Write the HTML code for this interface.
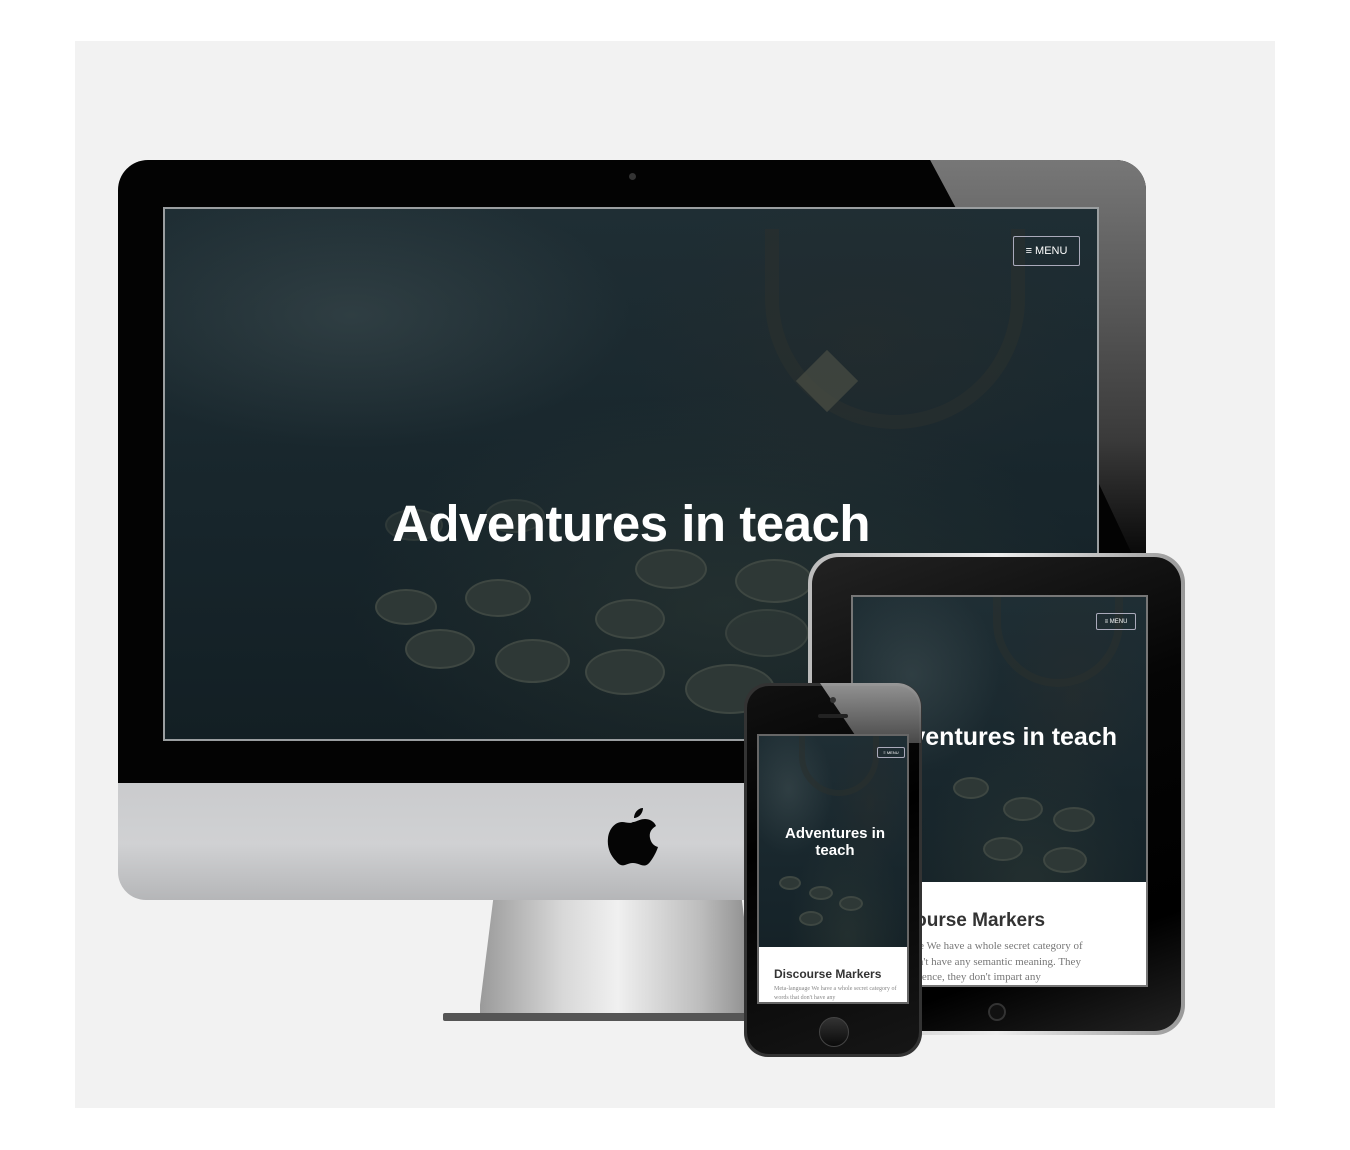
<!DOCTYPE html>
<html><head><meta charset="utf-8"><style>
*{margin:0;padding:0;box-sizing:border-box}
body{width:1350px;height:1150px;background:#fff;position:relative;overflow:hidden;font-family:"Liberation Sans",sans-serif}
.a{position:absolute}
.scr{background:
radial-gradient(ellipse 30% 25% at 20% 20%,rgba(70,85,88,.45),transparent),
radial-gradient(ellipse 40% 40% at 60% 75%,rgba(60,70,60,.35),transparent),
radial-gradient(ellipse 25% 30% at 75% 25%,rgba(40,45,45,.5),transparent),
linear-gradient(180deg,#1f2e34,#17252b 60%,#131f24);overflow:hidden}
.key{position:absolute;border-radius:50%;background:#2e3836;border:2px solid #3e4742}
.menu{position:absolute;border:1px solid #aab;border-radius:2px;color:#fff;font-size:11px;display:flex;align-items:center;justify-content:center}
</style></head><body>
<div class="a" style="left:75px;top:41px;width:1200px;height:1067px;background:#f2f2f2"></div>

<!-- iMac stand -->
<div class="a" style="left:480px;top:895px;width:275px;height:122px;background:linear-gradient(90deg,#9a9a9a,#d8d8d8 30%,#f0f0f0 50%,#bdbdbd 80%,#8a8a8a);clip-path:polygon(5% 0,95% 0,100% 90%,100% 100%,0 100%,0 90%)"></div>
<div class="a" style="left:443px;top:1013px;width:310px;height:8px;background:#555;border-radius:2px"></div>
<!-- iMac chin -->
<div class="a" style="left:118px;top:760px;width:1028px;height:140px;border-radius:0 0 28px 28px;background:linear-gradient(180deg,#c8c9cb,#d0d1d3 60%,#b5b6b8)"></div>
<!-- iMac bezel -->
<div class="a" style="left:118px;top:160px;width:1028px;height:623px;border-radius:30px 30px 0 0;background:#030303"></div>
<div class="a" style="left:118px;top:160px;width:1028px;height:623px;border-radius:30px 30px 0 0;background:linear-gradient(180deg,#777,#3a3a3a 45%,#050505 65%);clip-path:polygon(79% 0,100% 0,100% 68%,92% 40%)"></div>
<div class="a" style="left:629px;top:173px;width:7px;height:7px;border-radius:50%;background:#333"></div>
<!-- apple logo -->
<svg class="a" style="left:607px;top:806px" width="52" height="62" viewBox="0 0 52 62"><path d="M36 2c0 5-4 10-9 10 0-5 4-10 9-10zM26 16c3 0 7-3 12-3 4 0 9 2 11 7-5 3-7 7-6 12 1 5 4 8 8 9-2 6-5 11-8 15-3 4-6 4-9 3-3-1-5-2-8-2s-5 1-8 2c-3 1-6 0-9-4C3 49 0 41 1 32c1-9 7-16 14-16 4 0 8 2 11 0z" fill="#050505"/></svg>
<!-- iMac screen -->
<div class="a scr" style="left:163px;top:207px;width:936px;height:534px;border:2px solid #9a9ea0">
 <div class="key" style="left:240px;top:420px;width:70px;height:40px"></div>
 <div class="key" style="left:330px;top:430px;width:75px;height:44px"></div>
 <div class="key" style="left:420px;top:440px;width:80px;height:46px"></div>
 <div class="key" style="left:210px;top:380px;width:62px;height:36px"></div>
 <div class="key" style="left:300px;top:370px;width:66px;height:38px"></div>
 <div class="key" style="left:430px;top:390px;width:70px;height:40px"></div>
 <div class="key" style="left:520px;top:455px;width:90px;height:50px"></div>
 <div class="key" style="left:470px;top:340px;width:72px;height:40px"></div>
 <div class="key" style="left:570px;top:350px;width:78px;height:44px"></div>
 <div class="key" style="left:220px;top:300px;width:58px;height:32px;opacity:.6"></div>
 <div class="key" style="left:320px;top:290px;width:60px;height:34px;opacity:.6"></div>
 <div class="key" style="left:560px;top:400px;width:84px;height:48px;opacity:.8"></div>
 <div class="a" style="left:600px;top:20px;width:260px;height:200px;border:14px solid #2a302e;border-top:none;border-radius:0 0 130px 130px;opacity:.6"></div>
 <div class="a" style="left:640px;top:150px;width:44px;height:44px;background:#4a4f44;transform:rotate(45deg);opacity:.7"></div>
 <div class="a" style="left:0;top:285px;width:932px;text-align:center;color:#fff;font-weight:bold;font-size:51px;letter-spacing:-0.5px">Adventures in teach</div>
 <div class="menu" style="left:848px;top:27px;width:67px;height:30px">≡&nbsp;MENU</div>
</div>

<!-- iPad -->
<div class="a" style="left:808px;top:553px;width:377px;height:482px;border-radius:30px;background:linear-gradient(90deg,#bbb,#eee 50%,#999);"></div>
<div class="a" style="left:812px;top:557px;width:369px;height:474px;border-radius:27px;background:linear-gradient(160deg,#222,#050505 40%,#000 80%,#222)"></div>
<div class="a" style="left:988px;top:1003px;width:18px;height:18px;border-radius:50%;border:2px solid #333;background:#111"></div>
<div class="a scr" style="left:851px;top:595px;width:297px;height:392px;border:2px solid #777">
 <div class="key" style="left:100px;top:180px;width:36px;height:22px"></div>
 <div class="key" style="left:150px;top:200px;width:40px;height:24px"></div>
 <div class="key" style="left:200px;top:210px;width:42px;height:25px"></div>
 <div class="key" style="left:130px;top:240px;width:40px;height:24px"></div>
 <div class="key" style="left:190px;top:250px;width:44px;height:26px"></div>
 <div class="a" style="left:140px;top:0;width:130px;height:90px;border:8px solid #2a302e;border-top:none;border-radius:0 0 65px 65px;opacity:.6"></div>
 <div class="a" style="left:-270px;top:126px;width:534px;text-align:right;color:#fff;font-weight:bold;font-size:25px;white-space:nowrap">Adventures in teach</div>
 <div class="menu" style="left:243px;top:16px;width:40px;height:17px;font-size:6px">≡&nbsp;MENU</div>
 <div class="a" style="left:0;top:285px;width:297px;height:110px;background:#fff">
  <div class="a" style="left:22px;top:28px;color:#333;font-size:19px;font-weight:bold;white-space:nowrap">Discourse Markers</div>
  <div class="a" style="left:5px;top:57px;color:#777;font-family:'Liberation Serif',serif;font-size:11px;line-height:15.5px;width:330px;white-space:nowrap">Meta-language We have a whole secret category of<br>words that don't have any semantic meaning. They<br>add to the sentence, they don't impart any</div>
 </div>
</div>

<!-- iPhone -->
<div class="a" style="left:744px;top:683px;width:178px;height:374px;border-radius:24px;background:#333"></div>
<div class="a" style="left:747px;top:686px;width:172px;height:368px;border-radius:22px;background:linear-gradient(160deg,#111,#000 40%,#161616)"></div>
<div class="a" style="left:820px;top:683px;width:101px;height:60px;background:linear-gradient(180deg,#aaa,#555);clip-path:polygon(0 0,100% 0,100% 100%,40% 100%);border-radius:0 24px 0 0;opacity:.85"></div>
<div class="a" style="left:830px;top:697px;width:6px;height:6px;border-radius:50%;background:#333"></div>
<div class="a" style="left:818px;top:714px;width:30px;height:4px;border-radius:2px;background:#222"></div>
<div class="a" style="left:819px;top:1017px;width:30px;height:30px;border-radius:50%;background:linear-gradient(#333,#0a0a0a);border:1px solid #444"></div>
<div class="a scr" style="left:757px;top:734px;width:152px;height:270px;border:2px solid #666">
 <div class="key" style="left:20px;top:140px;width:22px;height:14px"></div>
 <div class="key" style="left:50px;top:150px;width:24px;height:14px"></div>
 <div class="key" style="left:80px;top:160px;width:24px;height:15px"></div>
 <div class="key" style="left:40px;top:175px;width:24px;height:15px"></div>
 <div class="a" style="left:40px;top:0;width:80px;height:60px;border:6px solid #2a302e;border-top:none;border-radius:0 0 40px 40px;opacity:.6"></div>
 <div class="a" style="left:0;top:89px;width:152px;text-align:center;color:#fff;font-weight:bold;font-size:15px;line-height:17px">Adventures in<br>teach</div>
 <div class="menu" style="left:118px;top:11px;width:28px;height:11px;font-size:4px">≡ MENU</div>
 <div class="a" style="left:0;top:211px;width:148px;height:60px;background:#fff">
  <div class="a" style="left:15px;top:20px;color:#333;font-size:12px;font-weight:bold;white-space:nowrap">Discourse Markers</div>
  <div class="a" style="left:15px;top:38px;color:#888;font-family:'Liberation Serif',serif;font-size:6px;line-height:9px;width:125px">Meta-language We have a whole secret category of words that don't have any</div>
 </div>
</div>
</body></html>
